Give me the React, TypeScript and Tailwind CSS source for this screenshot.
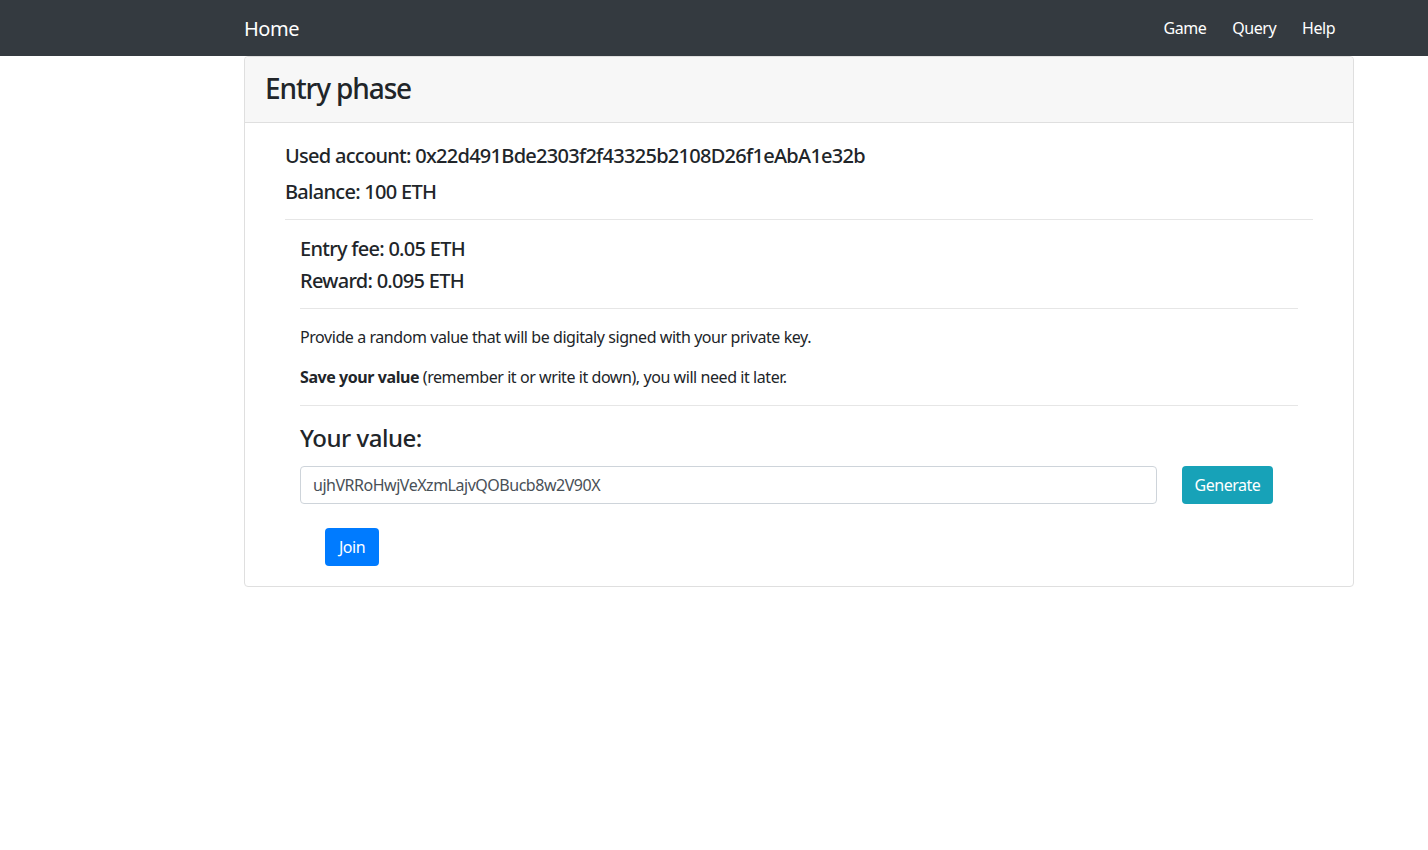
export default function App() {
  return (
    <div className="min-h-[850px] bg-white font-['Noto_Sans',sans-serif] tracking-[-0.03em] text-[#212529]">
      {/* NAVBAR */}
      <nav className="h-14 bg-[#343a40]">
        <div className="ml-[244px] w-[1110px] h-full flex items-center justify-between">
          <span className="pt-0.5 text-[20px] text-white leading-none">Home</span>
          <div className="flex items-center gap-[26px] pr-[19px] text-[16px] text-white">
            <span>Game</span>
            <span>Query</span>
            <span>Help</span>
          </div>
        </div>
      </nav>

      {/* CARD */}
      <div className="ml-[244px] w-[1110px] border border-[#dfdfdf] rounded-[4px]">
        <div className="h-[66px] bg-[#f7f7f7] border-b border-[#dfdfdf] flex items-center px-5 pb-1 rounded-t-[4px]">
          <h3 className="text-[28px] font-medium leading-none tracking-[-0.04em]">Entry phase</h3>
        </div>

        <div className="p-5">
          <div className="px-5 pt-px">
            <h5 className="text-[20px] font-medium leading-6 tracking-[-0.036em]">
              Used account: 0x22d491Bde2303f2f43325b2108D26f1eAbA1e32b
            </h5>
            <h5 className="mt-3 text-[20px] font-medium leading-6 tracking-[-0.036em]">Balance: 100 ETH</h5>
            <hr className="mt-[15px] border-[#e6e6e6]" />

            <div className="px-[15px]">
              <h5 className="mt-[17px] text-[20px] font-medium leading-6 tracking-[-0.036em]">Entry fee: 0.05 ETH</h5>
              <h5 className="mt-2 text-[20px] font-medium leading-6 tracking-[-0.036em]">Reward: 0.095 ETH</h5>
              <hr className="mt-[15px] border-[#e6e6e6]" />

              <p className="mt-4 text-[16px] leading-6 tracking-[-0.027em]">
                Provide a random value that will be digitaly signed with your private key.
              </p>
              <p className="mt-4 text-[16px] leading-6 tracking-[-0.027em]">
                <b className="font-bold">Save your value</b> (remember it or write it down), you will need it later.
              </p>
              <hr className="mt-4 border-[#e6e6e6]" />

              <h4 className="mt-[17px] text-[24px] font-medium leading-[29px]">Your value:</h4>

              <div className="mt-[14px] flex items-center gap-[25px] pr-[25px]">
                <input
                  readOnly
                  value="ujhVRRoHwjVeXzmLajvQOBucb8w2V90X"
                  className="flex-1 h-[38px] px-3 border border-[#ced4da] rounded-[4px] text-[16px] tracking-[-0.03em] text-[#495057] outline-none"
                />
                <button className="h-[38px] w-[91px] rounded-[4px] bg-[#17a2b8] text-white text-[16px]">
                  Generate
                </button>
              </div>

              <button className="mt-6 ml-[25px] h-[38px] w-[54px] rounded-[4px] bg-[#007bff] text-white text-[16px]">
                Join
              </button>
            </div>
          </div>
        </div>
      </div>
    </div>
  );
}
